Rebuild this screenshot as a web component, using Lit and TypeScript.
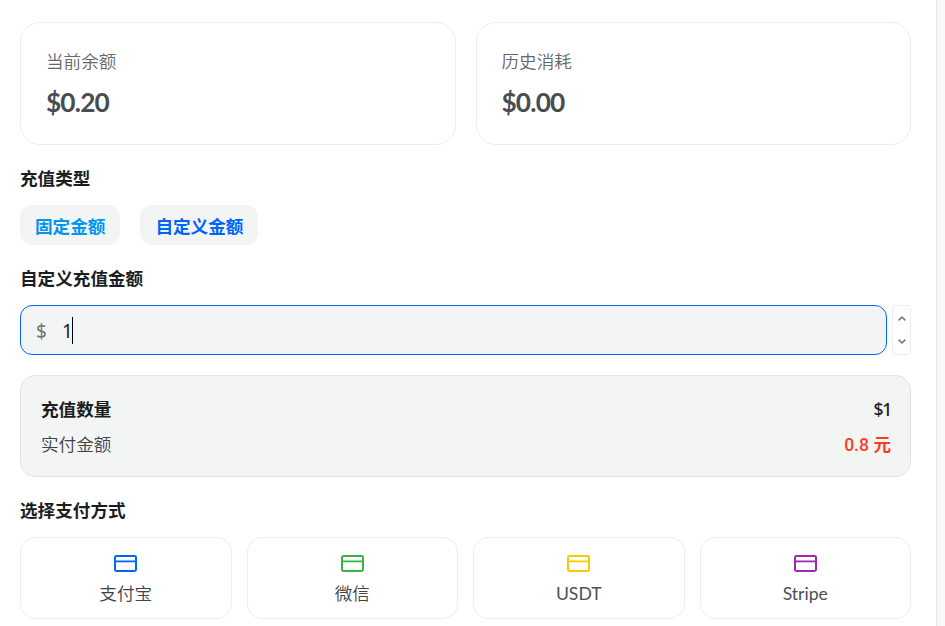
import { LitElement, html, css } from "lit";
import { customElement, property } from "lit/decorators.js";

@customElement("stat-card")
class StatCard extends LitElement {
  @property() label = "";
  @property() value = "";

  static styles = css`
    :host {
      display: block;
      flex: 1 1 0;
      box-sizing: border-box;
      height: 123px;
      padding: 25px;
      border: 1px solid #ecedee;
      border-radius: 20px;
    }
    .label {
      color: #64686c;
      font-weight: 350;
      line-height: 28px;
    }
    .value {
      margin-top: 6px;
      color: #484d51;
      font-size: 26.25px;
      font-weight: 700;
      line-height: 41px;
      letter-spacing: -0.85px;
    }
  `;

  render() {
    return html`<div class="label">${this.label}</div>
      <div class="value">${this.value}</div>`;
  }
}

@customElement("pay-method")
class PayMethod extends LitElement {
  @property() label = "";
  @property() color = "";

  static styles = css`
    :host {
      display: flex;
      flex: 1 1 0;
      flex-direction: column;
      align-items: center;
      box-sizing: border-box;
      height: 82px;
      padding-top: 17px;
      border: 1px solid #ecedee;
      border-radius: 15px;
    }
    svg {
      display: block;
      width: 23px;
      height: 17px;
    }
    .label {
      margin-top: 9px;
      color: #404347;
      font-weight: 350;
      line-height: 26px;
    }
    .latin {
      color: #4c5054;
      font-weight: 400;
    }
  `;

  render() {
    const latin = /^[A-Za-z]+$/.test(this.label);
    return html`<svg viewBox="0 0 23 17" fill="none" stroke=${this.color}>
        <rect x="1" y="1" width="21" height="15" rx="1.4" stroke-width="2" />
        <path d="M1 6.4H22" stroke-width="1.8" />
      </svg>
      <div class="label ${latin ? "latin" : ""}">${this.label}</div>`;
  }
}

@customElement("app-root")
class AppRoot extends LitElement {
  static styles = css`
    :host {
      display: block;
      width: 945px;
      height: 626px;
      overflow: hidden;
      background: linear-gradient(to right, #f6f6f6 937px, #fafafa 943px);
      font-family: Lato, "Noto Sans CJK SC", sans-serif;
      font-size: 17.6px;
      color: #1b1e21;
    }
    .panel {
      box-sizing: border-box;
      width: 937px;
      height: 100%;
      padding: 22px 25px 0 20px;
      border-right: 1px solid #e4e4e4;
      background: #fff;
    }
    .row {
      display: flex;
      gap: 20px;
    }
    .title {
      height: 28px;
      line-height: 28px;
      font-weight: 700;
    }
    .types {
      margin-top: 20px;
    }
    .chips {
      margin-top: 12px;
    }
    .chip {
      box-sizing: border-box;
      height: 40px;
      padding: 0 15px;
      border-radius: 12px;
      background: #f3f5f5;
      color: #0064fa;
      font-weight: 700;
      line-height: 43px;
    }
    .muted {
      color: #0095ee;
    }
    .custom {
      margin-top: 20px;
    }
    .amount {
      display: flex;
      gap: 5px;
      margin-top: 12px;
      height: 50px;
    }
    .field {
      display: flex;
      flex: 1;
      align-items: center;
      box-sizing: border-box;
      padding-left: 15px;
      border: 1px solid #0064fa;
      border-radius: 12px;
      background: #f3f5f5;
      font-family: "Noto Sans", sans-serif;
      font-size: 19px;
      line-height: 26px;
    }
    .prefix {
      width: 26px;
      padding-top: 2px;
      color: #6e7276;
    }
    .digit {
      width: 10px;
      padding-top: 2px;
      font-weight: 400;
    }
    .caret {
      width: 1px;
      height: 27px;
      background: #000;
    }
    .spinner {
      display: flex;
      flex-direction: column;
      align-items: center;
      justify-content: space-between;
      box-sizing: border-box;
      width: 19px;
      padding: 10px 0;
      border: 1px solid #ecedee;
      border-radius: 4px;
    }
    .spinner svg {
      display: block;
      width: 8px;
      height: 5px;
    }
    .summary {
      box-sizing: border-box;
      height: 102px;
      margin-top: 20px;
      padding: 16px 19px 16px 20px;
      border: 1px solid #e1e4e4;
      border-radius: 15px;
      background: #f3f5f5;
    }
    .line {
      display: flex;
      justify-content: space-between;
      height: 35px;
      line-height: 35px;
      font-weight: 700;
    }
    .paid {
      color: #404347;
      font-weight: 350;
    }
    .count {
      font-family: "Noto Sans", sans-serif;
      font-size: 17.5px;
      font-weight: 500;
      letter-spacing: -1.2px;
    }
    .price {
      padding-top: 1px;
      color: #ff3b22;
      font-family: Roboto, "Noto Sans CJK SC", sans-serif;
      font-weight: 500;
    }
    .yuan {
      font-weight: 700;
    }
    .methods-title {
      margin-top: 20px;
    }
    .methods {
      display: flex;
      gap: 15px;
      margin-top: 12px;
    }
  `;

  private methods = [
    { label: "支付宝", color: "#0064fa" },
    { label: "微信", color: "#3bb346" },
    { label: "USDT", color: "#fac800" },
    { label: "Stripe", color: "#9e28b3" },
  ];

  render() {
    return html`<main class="panel">
      <section class="row">
        <stat-card label="当前余额" value="$0.20"></stat-card>
        <stat-card label="历史消耗" value="$0.00"></stat-card>
      </section>
      <div class="title types">充值类型</div>
      <div class="row chips">
        <div class="chip muted">固定金额</div>
        <div class="chip">自定义金额</div>
      </div>
      <div class="title custom">自定义充值金额</div>
      <div class="amount">
        <div class="field">
          <span class="prefix">$</span><span class="digit">1</span><span class="caret"></span>
        </div>
        <div class="spinner">
          <svg viewBox="0 0 8 5" fill="none" stroke="#76797c" stroke-width="1.5"><path d="M0.6 4.4L4 1.1L7.4 4.4" /></svg>
          <svg viewBox="0 0 8 5" fill="none" stroke="#76797c" stroke-width="1.5"><path d="M0.6 0.6L4 3.9L7.4 0.6" /></svg>
        </div>
      </div>
      <section class="summary">
        <div class="line"><span>充值数量</span><span class="count">$1</span></div>
        <div class="line"><span class="paid">实付金额</span><span class="price">0.8 <span class="yuan">元</span></span></div>
      </section>
      <div class="title methods-title">选择支付方式</div>
      <div class="methods">
        ${this.methods.map((m) => html`<pay-method label=${m.label} color=${m.color}></pay-method>`)}
      </div>
    </main>`;
  }
}
